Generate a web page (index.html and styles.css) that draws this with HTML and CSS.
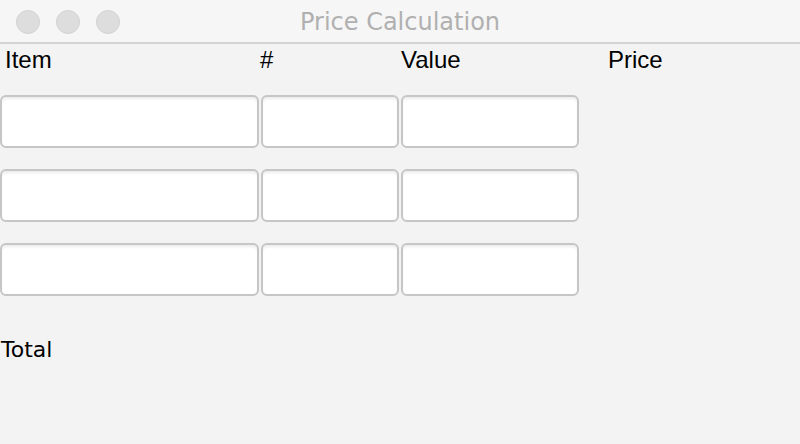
FILE: index.html
```html
<!DOCTYPE html>
<html>
<head>
<meta charset="utf-8">
<link rel="stylesheet" href="styles.css">
</head>
<body>
<div class="window">
  <header class="titlebar">
    <div class="lights">
      <span class="light"></span>
      <span class="light"></span>
      <span class="light"></span>
    </div>
    <div class="title">Price Calculation</div>
  </header>
  <main class="content">
    <div class="labels">
      <div class="label label-item">Item</div>
      <div class="label">#</div>
      <div class="label label-value">Value</div>
      <div class="label label-price">Price</div>
    </div>
    <div class="grid">
      <input class="field" type="text"><input class="field" type="text"><input class="field" type="text"><div></div>
      <input class="field" type="text"><input class="field" type="text"><input class="field" type="text"><div></div>
      <input class="field" type="text"><input class="field" type="text"><input class="field" type="text"><div></div>
    </div>
    <div class="total">Total</div>
  </main>
</div>
</body>
</html>
```
FILE: styles.css
```css
html, body {
  margin: 0;
  padding: 0;
}
body {
  width: 800px;
  height: 444px;
  overflow: hidden;
  background: #f3f3f3;
  font-family: "Liberation Sans", Arial, sans-serif;
  color: #000;
}
.window {
  display: flex;
  flex-direction: column;
  height: 444px;
}
.titlebar {
  position: relative;
  height: 42px;
  flex: none;
  background: #f6f6f6;
  border-bottom: 2px solid #d4d4d4;
  display: flex;
  align-items: center;
  justify-content: center;
}
.lights {
  position: absolute;
  left: 16px;
  top: 10px;
  display: flex;
  gap: 16px;
}
.light {
  width: 22px;
  height: 22px;
  border-radius: 50%;
  background: #dddddd;
  border: 1px solid #d2d2d2;
}
.title {
  font-family: "DejaVu Sans", sans-serif;
  font-size: 24px;
  color: #b0b0b0;
  line-height: 42px;
  margin-top: 2px;
}
.content {
  flex: 1;
  display: flex;
  flex-direction: column;
}
.labels,
.grid {
  display: grid;
  grid-template-columns: 260px 140px 180px 1fr;
}
.labels {
  height: 51px;
}
.grid {
  grid-template-rows: 53px 53px 53px;
  row-gap: 21px;
}
.label {
  font-size: 24px;
  line-height: 32px;
}
.label-item {
  padding-left: 5px;
}
.label-value {
  padding-left: 1px;
}
.label-price {
  padding-left: 28px;
}
.field {
  box-sizing: border-box;
  height: 53px;
  width: 100%;
  margin: 0;
  padding: 0 8px;
  border: 2px solid #c6c6c6;
  border-radius: 6px;
  background: #fff;
  box-shadow: inset 0 3px 3px -1px rgba(0, 0, 0, 0.08);
  font-size: 24px;
  outline: none;
}
.grid .field:nth-child(4n+1) {
  width: 259px;
}
.grid .field:nth-child(4n+2) {
  margin-left: 1px;
  width: 138px;
}
.grid .field:nth-child(4n+3) {
  margin-left: 1px;
  width: 178px;
}
.total {
  font-family: "DejaVu Sans", sans-serif;
  font-size: 22px;
  line-height: 32px;
  margin-top: 38px;
  padding-left: 1px;
}
```
